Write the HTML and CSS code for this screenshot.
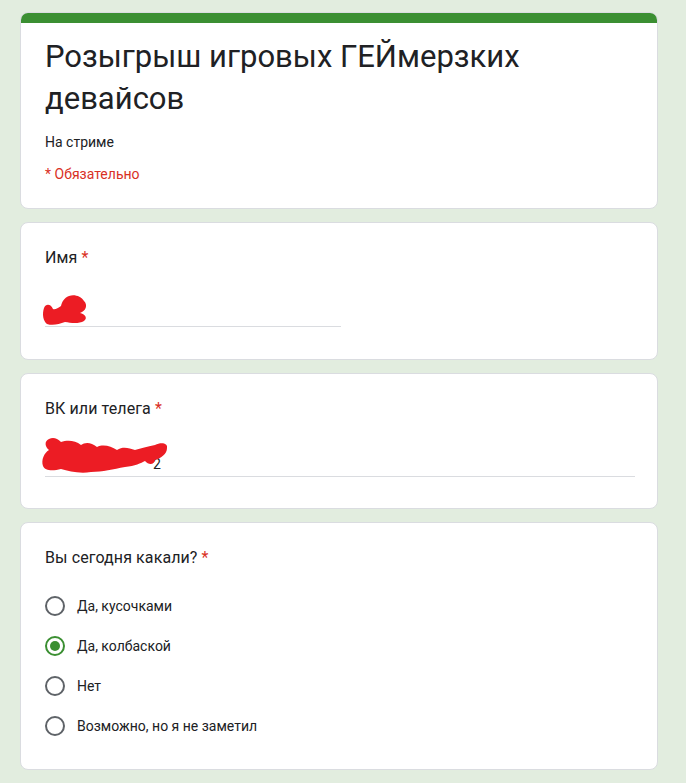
FILE: index.html
```html
<!DOCTYPE html>
<html lang="ru">
<head>
<meta charset="utf-8">
<title>Розыгрыш игровых ГЕЙмерзких девайсов</title>
<link rel="stylesheet" href="styles.css">
</head>
<body>
<main class="form">
  <section class="card header-card">
    <div class="bar"></div>
    <div class="header-body">
      <h1 class="title">Розыгрыш игровых ГЕЙмерзких девайсов</h1>
      <p class="desc">На стриме</p>
      <p class="required-note">* Обязательно</p>
    </div>
  </section>

  <section class="card question">
    <div class="q-title">Имя <span class="star">*</span></div>
    <div class="input short">
      <svg class="scribble" width="50" height="34" viewBox="0 0 50 34">
        <path d="M3 16 C1 22 2 29 6 32 C12 34 18 32 24 30 C30 31 38 32 43 29 C47 26 44 22 39 21 C45 19 47 13 43 9 C40 4 33 2 28 4 C23 6 21 10 20 14 C17 16 14 18 12 17 C10 12 5 11 3 16 Z" fill="#ec1c24"/>
      </svg>
    </div>
  </section>

  <section class="card question">
    <div class="q-title">ВК или телега <span class="star">*</span></div>
    <div class="input long">
      <span class="hidden-text">2</span>
      <svg class="scribble" width="130" height="40" viewBox="0 0 130 40">
        <path d="M8 3 C3 5 4 11 8 14 C3 17 0 24 2 30 C4 35 12 35 20 33 C28 35 38 38 50 36 C62 36 72 33 84 31 C94 30 100 27 104 25 C108 30 114 28 114 24 C120 22 126 18 126 12 C127 7 120 6 114 9 C106 11 100 12 94 14 C88 12 82 10 76 14 C70 10 62 8 56 11 C50 6 44 6 40 9 C34 4 26 4 20 6 C16 2 12 1 8 3 Z" fill="#ec1c24"/>
      </svg>
    </div>
  </section>

  <section class="card question options-card">
    <div class="q-title">Вы сегодня какали? <span class="star">*</span></div>
    <div class="options">
      <div class="option"><span class="radio"></span><span class="label">Да, кусочками</span></div>
      <div class="option"><span class="radio checked"></span><span class="label">Да, колбаской</span></div>
      <div class="option"><span class="radio"></span><span class="label">Нет</span></div>
      <div class="option"><span class="radio"></span><span class="label">Возможно, но я не заметил</span></div>
    </div>
  </section>

  <div class="actions">
    <button class="submit">Отправить</button>
  </div>
</main>
</body>
</html>
```

FILE: styles.css
```css
html, body {
  margin: 0;
  padding: 0;
  background: #e2eddf;
  font-family: Roboto, "Noto Sans", Arial, sans-serif;
  color: #202124;
  overflow: hidden;
}

.form {
  width: 638px;
  margin: 12px 0 0 20px;
  display: flex;
  flex-direction: column;
  gap: 13px;
}

.card {
  background: #fff;
  border: 1px solid #dadce0;
  border-radius: 8px;
  box-sizing: border-box;
  overflow: hidden;
}

.bar {
  height: 10px;
  background: #3b8f32;
}

.header-body {
  padding: 13px 24px 24px;
}

.title {
  margin: 0;
  font-weight: 400;
  font-size: 31px;
  line-height: 42px;
  width: 500px;
  color: #202124;
}

.desc {
  margin: 12px 0 0;
  font-size: 14px;
  line-height: 20px;
}

.required-note {
  margin: 12px 0 0;
  font-size: 14px;
  line-height: 20px;
  color: #d93025;
}

.question {
  padding: 23px 24px 24px;
}

.options-card {
  padding-bottom: 23px;
}

.q-title {
  font-size: 16px;
  line-height: 24px;
  letter-spacing: 0.1px;
}

.star {
  color: #d93025;
}

.input {
  position: relative;
  margin-top: 16px;
  height: 39px;
  border-bottom: 1px solid #dadce0;
  margin-bottom: 7px;
}

.input.short {
  width: 296px;
  margin-top: 17px;
  margin-bottom: 8px;
}

.input.long {
  width: 590px;
}

.scribble {
  position: absolute;
  left: -4px;
  bottom: 0;
}

.hidden-text {
  position: absolute;
  left: 108px;
  bottom: 4px;
  font-size: 14px;
  color: #202124;
}

.options {
  margin-top: 16px;
  display: flex;
  flex-direction: column;
}

.option {
  height: 40px;
  display: flex;
  align-items: center;
  gap: 12px;
}

.radio {
  width: 20px;
  height: 20px;
  box-sizing: border-box;
  border: 2px solid #5f6368;
  border-radius: 50%;
  display: flex;
  align-items: center;
  justify-content: center;
}

.radio.checked {
  border-color: #3b8f32;
}

.radio.checked::after {
  content: "";
  width: 10px;
  height: 10px;
  border-radius: 50%;
  background: #3b8f32;
}

.label {
  font-size: 14px;
  line-height: 20px;
}

.submit {
  display: block;
  width: 120px;
  height: 36px;
  border: none;
  border-radius: 4px;
  background: #3b8f32;
  color: #fff;
  font-family: Roboto, sans-serif;
  font-size: 14px;
  font-weight: 500;
}
```
